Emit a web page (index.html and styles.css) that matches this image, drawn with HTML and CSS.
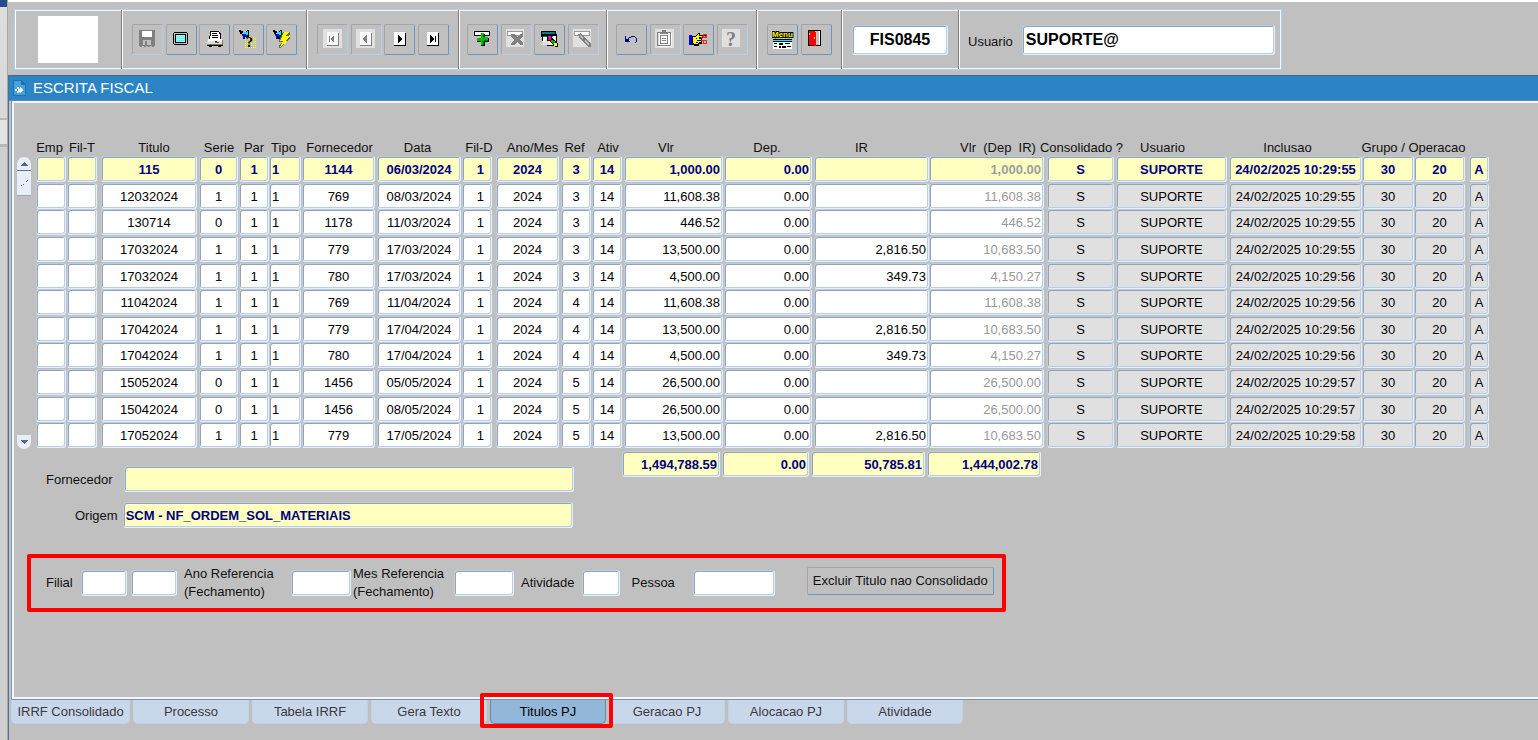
FILE: index.html
```html
<!DOCTYPE html>
<html lang="pt-BR">
<head>
<meta charset="utf-8">
<title>Escrita Fiscal</title>
<link rel="stylesheet" href="styles.css">
</head>
<body>
<div class="edge"></div>
<main class="app">
  <header class="toolbar">
    <div class="group group-logo"><div class="logo"></div></div>
    <div class="group group-five">
      <button class="tool" disabled aria-label="Salvar"><svg viewBox="0 0 22 22"><path fill="#808080" d="M2 2h16v16h-1v1h-2v-1h-2v1h-2v-1h-2v1h-2v-1h-2v1h-2v-1h-1z"/><path fill="#fff" d="M5 3h10v6h-10z"/><path fill="#c0c0c0" d="M6 12h8v5h-8z"/><path fill="#808080" d="M8 13h2v4h-2z"/></svg></button>
      <button class="tool" aria-label="Tela"><svg viewBox="0 0 22 22"><path d="M4 4h13v1h1v11h-1v1h-13v-1h-1v-11h1z"/><path fill="#c0c0c0" d="M4 5h13v11h-13z"/><path d="M5 6h11v9h-11z"/><path fill="#fff" d="M6 7h9v7h-9z"/><path fill="#7ff" d="M6 7h9v7h-9z"/><path fill="#fff" d="M7 7h1v7h-1zM9 7h1v7h-1zM11 7h1v7h-1zM13 7h1v7h-1z"/><path fill="#3ee" d="M7 8h1v1h-1zM9 8h1v1h-1zM11 8h1v1h-1zM13 8h1v1h-1zM7 10h1v1h-1zM9 10h1v1h-1zM11 10h1v1h-1zM13 10h1v1h-1zM7 12h1v1h-1zM9 12h1v1h-1zM11 12h1v1h-1zM13 12h1v1h-1z"/></svg></button>
      <button class="tool" aria-label="Imprimir"><svg viewBox="0 0 22 22"><path d="M6 3h9v1h1v1h1v6h-12v-3h1z"/><path fill="#fff" d="M7 4h8v2h1v5h-10v-3h1z"/><path d="M8 5h5v1h-5zM8 7h6v1h-6zM8 9h6v1h-6z"/><path fill="#fff" d="M4 11h14v2h-14z"/><path fill="#e0e0e0" d="M3 13h15v4h-15z"/><path fill="#777" d="M18 12h1v5h-1zM3 16h15v1h-15z"/><path d="M3 17h16v1h-16zM5 18h3v1h-3zM14 18h3v1h-3z"/><path fill="#00f" d="M11 13h2v1h-2z"/><path fill="#f00" d="M13 14h2v1h-2z"/><path fill="#00b000" d="M11 14h2v1h-2z"/><path fill="#ff0" d="M15 14h2v1h-2z"/></svg></button>
      <button class="tool" aria-label="Entrar consulta"><svg viewBox="0 0 22 22"><path d="M2 2h2v1h2v2h-1v1h-2v-2h-1zM7 5l3-3h2v7h-2v2h-4v-3z"/><path fill="#0ef" d="M7 4h3v-1h1v4h-2v-1h-2z"/><path fill="#00f" d="M5 6h3v1h2v2h-3v1h-1z"/><path stroke="#ff0" stroke-width="11" stroke-dasharray="1 1" d="M8 14h12"/><path stroke="#c0c0c0" d="M8 10h12M8 12h12M8 14h12M8 16h12M8 18h12"/><text class="glyph-query" x="9" y="19">?</text></svg></button>
      <button class="tool" aria-label="Executar consulta"><svg viewBox="0 0 22 22"><path d="M2 2h2v1h2v2h-1v1h-2v-2h-1zM6 5l3-3h2v7h-2v2h-4v-3z"/><path fill="#0ef" d="M6 4h3v-1h1v4h-2v-1h-2z"/><path fill="#00f" d="M4 6h3v1h2v2h-3v1h-1z"/><path fill="#665" d="M12 4h7v2l-2 3h2v1l-4 4h1l-7 6h-1v-2l3-4h-3v-2z"/><path fill="#ff0" d="M13 4h5l-3 4h4l-5 5h3l-8 6 3-6h-3z"/></svg></button>
    </div>
    <div class="group group-four group-nav">
      <button class="tool" disabled aria-label="Primeiro"><svg viewBox="0 0 22 22"><path fill="#e0e0e0" d="M1 1h19v19h-19z"/><path fill="#808080" d="M6 5h11v13h-12v-1h11z"/><path fill="#f8f8f8" d="M5 4h11v13h-11z"/><path fill="#808080" d="M7 8h1v6h-1zM9 10l3-3v8l-3-3z"/></svg></button>
      <button class="tool" disabled aria-label="Anterior"><svg viewBox="0 0 22 22"><path fill="#e0e0e0" d="M1 1h19v19h-19z"/><path fill="#808080" d="M6 5h11v13h-12v-1h11z"/><path fill="#f8f8f8" d="M5 4h11v13h-11z"/><path fill="#808080" d="M8 10l4-3v8l-4-3z"/></svg></button>
      <button class="tool" aria-label="Proximo"><svg viewBox="0 0 22 22"><path d="M6 5h11v13h-12v-1h11z"/><path fill="#fff" d="M5 4h11v13h-11z"/><path d="M9 7l4 3v2l-4 3z"/></svg></button>
      <button class="tool" aria-label="Ultimo"><svg viewBox="0 0 22 22"><path d="M6 5h11v13h-12v-1h11z"/><path fill="#fff" d="M5 4h11v13h-11z"/><path d="M8 7l4 3v2l-4 3zM13 8h1v6h-1z"/></svg></button>
    </div>
    <div class="group group-four group-records">
      <button class="tool" aria-label="Inserir registro"><svg viewBox="0 0 22 22"><path d="M2 3h16v5h-16z"/><path fill="#fff" d="M3 4h14v3h-14z"/><path d="M9 6h4v4h4v4h-4v4h-4v-4h-4v-1h4z"/><path fill="#0b0" d="M9 5h3v4h4v4h-4v4h-3v-4h-4v-3h4z"/><path fill="#070" d="M11 6h1v3h-1zM12 12h4v1h-4zM11 13h1v4h-1z"/></svg></button>
      <button class="tool" disabled aria-label="Remover registro"><svg viewBox="0 0 22 22"><path fill="#e0e0e0" d="M1 1h18v18h-18z"/><path fill="#999" d="M2 3h16v5h-16z"/><path fill="#fff" d="M3 4h14v3h-14z"/><path fill="#808080" d="M6 6h3l3 3 3-3h3v2l-3 4 3 3v2h-3l-3-3-3 3h-3v-2l3-3-3-4z"/></svg></button>
      <button class="tool" aria-label="Limpar registro"><svg viewBox="0 0 22 22"><path d="M2 3h15v3h1v12h-10v-5h-5v-4h-1z"/><path fill="#008080" d="M3 4h13v2h-13z"/><path fill="#fff" d="M4 8h13v9h-13z"/><path fill="#008080" d="M4 8h10v1h-10z"/><path fill="#e0e0e0" d="M2 17l6-7 3 7z"/><path d="M8 8h5v2l6 6v3h-3l-6-6h-2z"/><path fill="#f0c" d="M9 8h3v4h-3z"/><path fill="#f00" d="M9 10h2v2h-2z"/><path fill="#0b0" d="M12 12h2v1h2v3h-2l-2-2z"/><path fill="#ff0" d="M15 15h3v3h-3z"/></svg></button>
      <button class="tool" disabled aria-label="Limpar bloco"><svg viewBox="0 0 22 22"><path fill="#e0e0e0" d="M1 1h18v18h-18z"/><path fill="#999" d="M2 3h16v5h-16z"/><path fill="#fff" d="M3 4h14v3h-14z"/><path fill="#808080" d="M6 6l3-1 10 11v3h-3l-9-10z"/><path fill="#c8c8c8" d="M8 7l9 9v2l-9-9z"/><path fill="#808080" d="M10 11l2-2 2 2-2 2z"/></svg></button>
    </div>
    <div class="group group-four group-edit">
      <button class="tool" aria-label="Desfazer"><svg viewBox="0 0 22 22"><path fill="#000080" d="M4 8h1v3h1v1h2v1h1v1h-5zM7 11h1v1h-2v-1zM7 10h1v-1h2v-1h4v1h1v1h1v4h-1v1h-1v-1h1v-4h-1v-1h-4v1h-2v1h-1z"/></svg></button>
      <button class="tool" disabled aria-label="Colar"><svg viewBox="0 0 22 22"><path fill="#e0e0e0" d="M1 1h19v19h-19z"/><path fill="#fff" d="M5 5h13v14h-13z"/><path fill="#808080" fill-rule="evenodd" d="M3 4h5v-2h4v2h5v14h-14zM4 5v12h12v-12zM6 7h8v9h-8zM7 8v7h6v-7z"/><path fill="#808080" d="M6 5h8v1h-8zM8 10h4v1h-4zM8 12h4v1h-4z"/></svg></button>
      <button class="tool" aria-label="Recortar"><svg viewBox="0 0 22 22"><path fill="#0000e0" d="M1 7h3v10h-3z"/><path d="M4 8h3l3-3h2v2h6v3h-4v6h-3v2h-5v-1h-2z"/><path fill="#ff0" d="M5 9h2l3-3h1v2h6v1h-6v2h2v1h-2v1h2v1h-2v1h-1v1h-4v-1h-1z"/><path d="M8 10h1v1h-1zM9 12h2v1h-2zM8 14h2v1h-2z"/><path fill="none" stroke="#f22" d="M13 10l2-2M13 12l2 1M15 6h3v3h-3zM15 12h3v3h-3z"/></svg></button>
      <button class="tool" disabled aria-label="Ajuda"><svg viewBox="0 0 22 22"><path fill="#e0e0e0" d="M1 1h18v18h-18z"/><text class="glyph-help" x="5" y="18">?</text></svg></button>
    </div>
    <div class="group group-two">
      <button class="tool" aria-label="Menu"><svg viewBox="0 0 22 22"><text class="glyph-menu" x="0" y="9">Menu</text><path d="M1 11h19v1h-19z"/><path fill="#0ef" d="M1 12h19v1h-19z"/><path d="M1 13h19v1h-19z"/><path fill="#fff" d="M1 14h19v7h-19z"/><path d="M2 15h3v1h-3zM7 15h4v2h-4zM13 15h5v1h-5zM2 18h3v1h-3zM7 18h2v2h-2zM10 18h4v2h-4zM15 18h4v1h-4z"/></svg></button>
      <button class="tool" aria-label="Sair"><svg viewBox="0 0 22 22"><path d="M2 2h13v16h-13z"/><path fill="#c0c0c0" d="M9 3h5v14h-5z"/><path fill="#fff" d="M13 3h1v14h-1z"/><path fill="#f00" d="M3 3h6v1h1v14h-2v-1h-5z"/><path fill="#ff0" d="M3 5h1v2h-1zM8 9h1v2h-1z"/></svg></button>
    </div>
    <div class="group group-form"><input class="field field-form" value="FIS0845" aria-label="Formulario"></div>
    <div class="group group-user"><label for="usuario">Usuario</label><input id="usuario" class="field field-user" value="SUPORTE@"></div>
  </header>

  <section class="window">
    <h1 class="titlebar"><svg class="titleicon" viewBox="0 0 13 16"><path fill="#1773b5" d="M0 0h8l5 5v11h-13z"/><path fill="#4ba0da" d="M1 1h7v4h4v10h-11z"/><path fill="#e8f5ff" d="M2 9h2v-2h2v2h1v3h-1v1h-2v-2h-2zM7 7l4 3-4 3z"/><path fill="#1773b5" d="M4 9h1v2h-1z"/></svg>ESCRITA FISCAL</h1>
    <div class="panel">
      <div class="records">
        <div class="scroll">
          <div>
            <button class="scroll-up" aria-label="Rolar para cima"><svg viewBox="0 0 14 14"><path d="M3 9l4-4 4 4z"/></svg></button>
            <div class="thumb"><svg viewBox="0 0 14 24"><path d="M4 14h1v1h-1zM6 13h1v1h-1zM9 10h1v1h-1zM10 9h1v1h-1z"/></svg></div>
          </div>
          <button class="scroll-down" aria-label="Rolar para baixo"><svg viewBox="0 0 14 14"><path d="M3 5l4 4 4-4z"/></svg></button>
        </div>
        <table class="grid">
          <colgroup id="cols"></colgroup>
          <thead><tr id="head"></tr></thead>
          <tbody id="rows"></tbody>
        </table>
      </div>

      <div class="summary">
        <div class="details">
          <div class="detail"><label for="fornecedor">Fornecedor</label><input id="fornecedor" class="field yellow" readonly></div>
          <div class="detail detail-origin"><label for="origem">Origem</label><input id="origem" class="field yellow" value="SCM - NF_ORDEM_SOL_MATERIAIS" readonly></div>
        </div>
        <div class="totals">
          <input class="field yellow total-vlr" value="1,494,788.59" aria-label="Total Vlr" readonly>
          <input class="field yellow total-dep" value="0.00" aria-label="Total Dep." readonly>
          <input class="field yellow total-ir" value="50,785.81" aria-label="Total IR" readonly>
          <input class="field yellow total-net" value="1,444,002.78" aria-label="Total Vlr (Dep IR)" readonly>
        </div>
      </div>

      <form class="filters">
        <div class="filter"><label for="filial">Filial</label><input id="filial" class="field w46"><input class="field w46" aria-label="Filial final"></div>
        <div class="filter filter-ref"><label for="ano">Ano Referencia<br>(Fechamento)</label><input id="ano" class="field w60"></div>
        <div class="filter filter-ref filter-month"><label for="mes">Mes Referencia<br>(Fechamento)</label><input id="mes" class="field w60"></div>
        <div class="filter filter-act"><label for="atividade">Atividade</label><input id="atividade" class="field w38"></div>
        <div class="filter filter-person"><label for="pessoa">Pessoa</label><input id="pessoa" class="field w82"></div>
        <button type="button" class="action">Excluir Titulo nao Consolidado</button>
      </form>
    </div>
    <nav class="tabs">
      <button class="tab first">IRRF Consolidado</button>
      <button class="tab">Processo</button>
      <button class="tab">Tabela IRRF</button>
      <button class="tab">Gera Texto</button>
      <div class="current"><button class="tab selected">Titulos PJ</button></div>
      <button class="tab">Geracao PJ</button>
      <button class="tab">Alocacao PJ</button>
      <button class="tab">Atividade</button>
    </nav>
  </section>
</main>
<script src="app.js"></script>
</body>
</html>
```
FILE: styles.css
```css
* { box-sizing: border-box; }
body {
  margin: 0;
  min-height: 100vh;
  display: flex;
  background: #c0c0c0;
  color: #111;
  font: 13px/16px "Liberation Sans", Arial, sans-serif;
}
button, input { font: inherit; color: inherit; margin: 0; padding: 0; }
svg { display: block; fill: #000; shape-rendering: crispEdges; }

.edge {
  flex: none;
  width: 8px;
  border-right: 1px solid #a8a8a8;
  background: linear-gradient(#274b8f 7px, #dedede 7px, #d8d8d8 118px, #b8b8b8 118px, #b8b8b8 120px, #e4e4e4 120px, #e4e4e4 144px, #b8b8b8 144px, #b8b8b8 147px, #cfcfcf 147px);
}
.app {
  flex: 1;
  min-width: 0;
  display: flex;
  flex-direction: column;
  border-top: 2px solid #fff;
}

/* Toolbar */
.toolbar {
  display: flex;
  align-self: flex-start;
  height: 61px;
  margin: 7px 0 5px 6px;
  border: 1px solid #b8cde6;
  box-shadow: inset 0 0 0 1px #f2f6fb;
}
.group {
  display: flex;
  align-items: center;
  justify-content: space-between;
  padding: 0 9px;
  border-left: 1px solid #fff;
  border-right: 1px solid #808080;
}
.group:last-child { border-right: 0; }
.group-logo { width: 107px; padding: 0 22px; }
.logo { width: 60px; height: 47px; background: #fff; }
.group-five { width: 185px; }
.group-nav { width: 152px; }
.group-records { width: 148px; padding: 0 7px; }
.group-edit { width: 150px; padding: 0 8px; }
.group-two { width: 85px; }
.group-form { width: 117px; }
.group-user { gap: 9px; padding: 0 6px 0 8px; }
.group-user label { padding-top: 5px; }
.tool {
  width: 31px;
  height: 31px;
  display: flex;
  justify-content: center;
  padding-top: 3px;
  background: none;
  border: 1px solid #a4a4a4;
  border-right-color: #6f94b8;
  border-bottom-color: #6f94b8;
  border-radius: 2px;
}
.tool svg { width: 22px; height: 22px; }
.tool:disabled { border-right-color: #b8cde6; border-bottom-color: #b8cde6; }
.glyph-query { font: bold 14px "Liberation Serif", serif; }
.glyph-help { font: bold 20px "Liberation Serif", serif; fill: #808080; }
.glyph-menu { font: bold 8px "Liberation Sans", sans-serif; fill: #ff0; stroke: #000; stroke-width: 2px; paint-order: stroke; }

/* Sunken box shared by inputs and grid cells */
.field, .cell {
  height: 26px;
  padding: 0 3px;
  background: #fff;
  border: 1px solid #b8cde6;
  border-right-color: #e6effa;
  border-bottom-color: #e6effa;
  border-radius: 3px;
  box-shadow: inset 1px 1px #9aa3ad, inset -1px -1px #b8cde6;
  outline: 0;
}
.field-form, .field-user { height: 30px; font-size: 16px; font-weight: bold; color: #000; }
.field-form { width: 96px; text-align: center; }
.field-user { width: 253px; }
.yellow { background: #ffffc0; color: #000080; font-weight: bold; }

/* Window */
.window { flex: 1; display: flex; flex-direction: column; padding-bottom: 16px; border-left: 1px solid #4d6f9c; }
.titlebar {
  display: flex;
  align-items: center;
  gap: 7px;
  height: 26px;
  margin: 0;
  padding-left: 4px;
  background: #2b84c5;
  border-top: 1px solid #44648c;
  border-bottom: 1px solid #5f87b0;
  color: #fff;
  font-size: 15px;
  font-weight: normal;
}
.titleicon { flex: none; width: 13px; height: 16px; }
.panel {
  flex: 1;
  margin-left: 2px;
  padding: 39px 0 20px 3px;
  border-left: 1px solid #7d97b5;
  border-bottom: 1px solid #7392b3;
  box-shadow: inset 2px 2px #f4f7fa, inset 0 -2px #f4f7fa;
}

/* Records */
.records { display: flex; gap: 5px; padding-left: 2px; }
.scroll { width: 14px; padding-top: 17px; display: flex; flex-direction: column; justify-content: space-between; }
.scroll-up, .scroll-down { display: block; width: 14px; height: 14px; background: #e8eef7; border: 0; }
.scroll svg { fill: #5c6680; }
.scroll-up { border-radius: 7px 7px 0 0; border-bottom: 1px solid #5c7494; }
.scroll-down { border-radius: 0 0 7px 7px; }
.thumb { height: 25px; background: #e8eef7; border-bottom: 1px solid #8fa6c4; }
.grid { table-layout: fixed; width: 1453px; height: 309px; border-collapse: collapse; }
.grid th, .grid td { padding: 0; font-weight: normal; vertical-align: top; }
.grid th { height: 16px; }
.heading { display: flex; justify-content: center; white-space: pre; }
.heading.slight { padding-right: 4px; }
.heading.left { padding-right: 16px; }
.heading.more { padding-right: 20px; }
.heading.right { padding-left: 8px; }
.heading.wide { padding-left: 20px; }
.cell { padding: 0 2px; line-height: 25px; text-align: center; white-space: nowrap; color: #000; }
.cell.num { text-align: right; }
.cell.end { text-align: right; padding-right: 7px; }
.cell.start { text-align: left; }
.cell.net { color: #999; }
.cell.locked { background: #e0e0e0; }
.active .cell { background: #ffffc0; color: #000080; font-weight: bold; }
.active .cell.net { color: #999f9f; }
.gap1 { margin-right: 1px; }
.gap2 { margin-right: 2px; }
.gap3 { margin-right: 3px; }
.gap4 { margin-right: 4px; }

/* Details and totals */
.summary { display: flex; padding: 2px 0 0 20px; }
.details { width: 587px; padding-top: 15px; display: flex; flex-direction: column; gap: 10px; }
.detail { display: flex; gap: 12px; padding-left: 11px; }
.detail-origin { gap: 5px; padding-left: 40px; }
.detail label { padding-top: 6px; }
.detail .field { width: 450px; padding: 0 2px; }
.totals { display: flex; align-items: flex-start; gap: 2px; }
.totals .field { text-align: right; padding: 0 2px; }
.total-vlr { width: 98px; }
.total-dep { width: 87px; }
.total-ir, .total-net { width: 114px; }

/* Filters */
.filters {
  display: flex;
  align-items: center;
  width: 979px;
  height: 58px;
  margin: 26px 0 0 12px;
  padding-left: 15px;
  border: 4px solid #f00;
  border-radius: 2px;
}
.filter { display: flex; align-items: center; gap: 4px; }
.filter label { min-width: 31px; }
.filter-ref { padding-left: 7px; }
.filter-ref label { width: 103px; line-height: 18px; }
.filter-month { padding-left: 2px; }
.filter-month label { width: 97px; }
.filter-act, .filter-person { padding-left: 7px; gap: 8px; }
.filter-person { padding-left: 11px; gap: 18px; }
.w38 { width: 38px; }
.w46 { width: 46px; }
.w60 { width: 60px; }
.w82 { width: 82px; }
.action {
  height: 28px;
  margin: 0 0 4px 32px;
  padding: 0 5px;
  background: none;
  border: 1px solid #a4a4a4;
  border-right-color: #6f94b8;
  border-bottom-color: #6f94b8;
  border-radius: 2px;
  white-space: nowrap;
}

/* Tabs */
.tabs { display: flex; gap: 3px; padding-left: 2px; }
.tab {
  width: 116px;
  height: 24px;
  background: #c9d7ea;
  border: 1px solid #c0d2e8;
  border-top: 0;
  border-radius: 0 0 5px 5px;
  color: #3a3a42;
  white-space: nowrap;
}
.tab.first { width: 119px; }
.tab.selected { background: #92b7d9; border-color: #6889ab; color: #000; }
.current { position: relative; }
.current::after {
  content: "";
  position: absolute;
  inset: -7px -7px -4px -10px;
  border: 4px solid #f00;
  border-radius: 2px;
  pointer-events: none;
}
```
FILE: app.js
```js
// [heading, column width, gap class, cell class, heading class]
const columns = [
  ["Emp", 31, "gap1", "", "slight"],
  ["Fil-T", 34, "gap4", "", "slight"],
  ["Titulo", 98, "gap2", "", "right"],
  ["Serie", 40, "gap1", "", ""],
  ["Par", 30, "", "", ""],
  ["Tipo", 33, "gap1", "start", "slight"],
  ["Fornecedor", 75, "gap2", "", ""],
  ["Data", 85, "gap1", "", "left-data slight"],
  ["Fil-D", 34, "gap4", "end", ""],
  ["Ano/Mes", 65, "gap2", "", "right"],
  ["Ref", 31, "gap1", "", "left-ref slight"],
  ["Ativ", 32, "gap2", "", ""],
  ["Vlr", 100, "gap1", "num", "left"],
  ["Dep.", 90, "gap2", "num", "slight"],
  ["IR", 115, "", "num", "more"],
  ["Vlr  (Dep  IR)", 118, "gap3", "num net", "wide"],
  ["Consolidado ?", 69, "gap2", "locked", ""],
  ["Usuario", 113, "gap2", "locked", "more"],
  ["Inclusao", 133, "", "locked", "left"],
  ["Grupo / Operacao", 52, "", "locked", "slight"],
  [null, 55, "gap4", "locked", ""],
  ["", 20, "", "locked", ""]
];

// titulo, serie, fornecedor, data, ref, vlr, ir, liquido, hora
const records = [
  ["115", "0", "1144", "06/03/2024", "3", "1,000.00", "", "1,000.00", "10:29:55"],
  ["12032024", "1", "769", "08/03/2024", "3", "11,608.38", "", "11,608.38", "10:29:55"],
  ["130714", "0", "1178", "11/03/2024", "3", "446.52", "", "446.52", "10:29:55"],
  ["17032024", "1", "779", "17/03/2024", "3", "13,500.00", "2,816.50", "10,683.50", "10:29:55"],
  ["17032024", "1", "780", "17/03/2024", "3", "4,500.00", "349.73", "4,150.27", "10:29:56"],
  ["11042024", "1", "769", "11/04/2024", "4", "11,608.38", "", "11,608.38", "10:29:56"],
  ["17042024", "1", "779", "17/04/2024", "4", "13,500.00", "2,816.50", "10,683.50", "10:29:56"],
  ["17042024", "1", "780", "17/04/2024", "4", "4,500.00", "349.73", "4,150.27", "10:29:56"],
  ["15052024", "0", "1456", "05/05/2024", "5", "26,500.00", "", "26,500.00", "10:29:57"],
  ["15042024", "0", "1456", "08/05/2024", "5", "26,500.00", "", "26,500.00", "10:29:57"],
  ["17052024", "1", "779", "17/05/2024", "5", "13,500.00", "2,816.50", "10,683.50", "10:29:58"]
];

document.getElementById("cols").innerHTML =
  columns.map(c => `<col style="width:${c[1]}px">`).join("");

document.getElementById("head").innerHTML = columns
  .filter(c => c[0] !== null)
  .map(c => `<th${c[0].startsWith("Grupo") ? ' colspan="2"' : ""}><div class="heading ${c[4]}">${c[0]}</div></th>`)
  .join("");

document.getElementById("rows").innerHTML = records.map((r, i) => {
  const [titulo, serie, forn, data, ref, vlr, ir, net, hora] = r;
  const values = ["", "", titulo, serie, "1", "1", forn, data, "1", "2024", ref, "14",
    vlr, "0.00", ir, net, "S", "SUPORTE", "24/02/2025 " + hora, "30", "20", "A"];
  const cells = values.map((v, k) =>
    `<td><div class="cell ${columns[k][3]} ${columns[k][2]}">${v}</div></td>`).join("");
  return `<tr${i === 0 ? ' class="active"' : ""}>${cells}</tr>`;
}).join("");
```
